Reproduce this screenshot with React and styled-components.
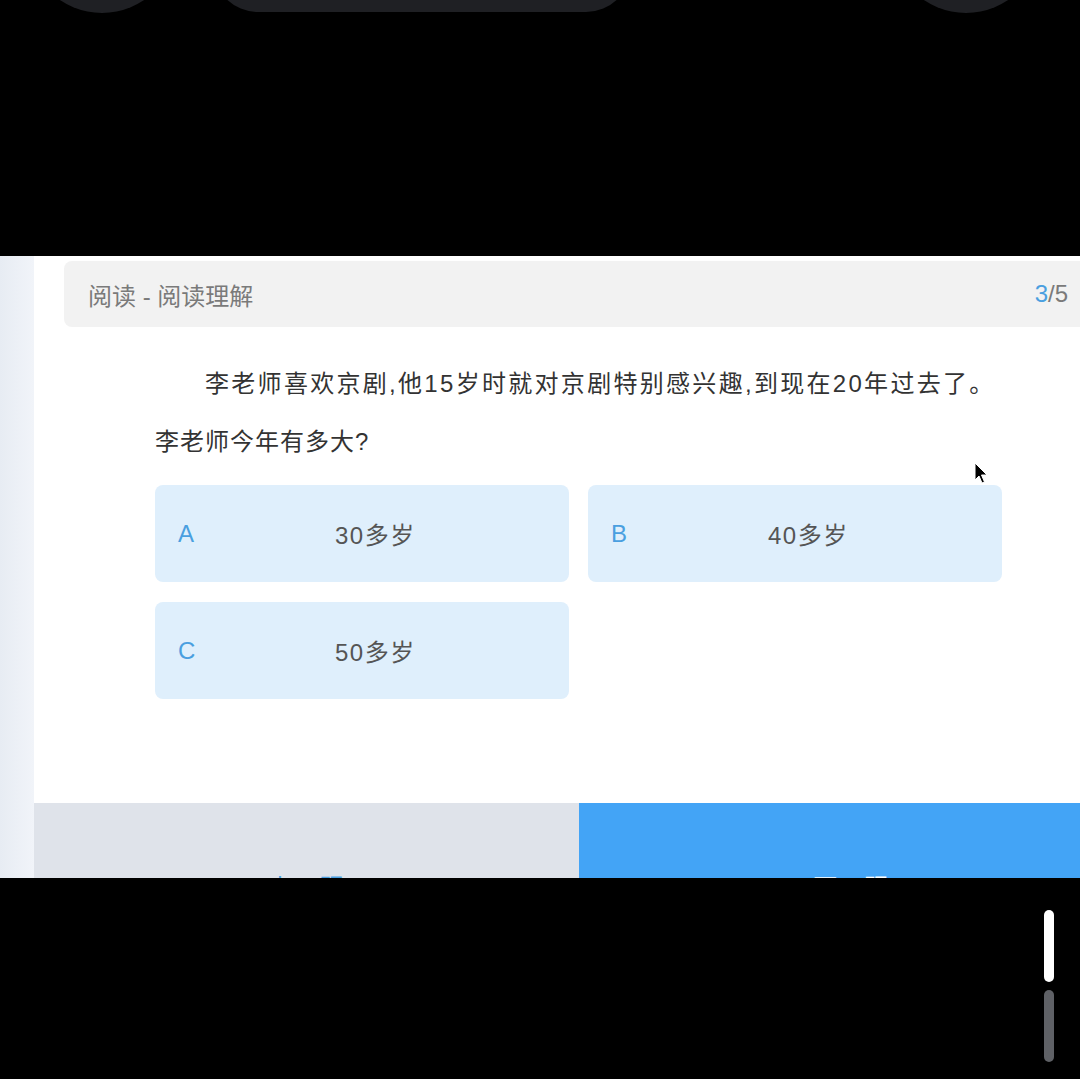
import React from "react";
import styled, { createGlobalStyle } from "styled-components";

const GlobalStyle = createGlobalStyle`
  html, body {
    margin: 0;
    padding: 0;
    background: #000;
    overflow: hidden;
  }
  body {
    font-family: "Liberation Sans", "Noto Sans CJK SC", sans-serif;
  }
`;

const Device = styled.div`
  width: 1080px;
  height: 1079px;
  background: #000;
  display: flex;
  flex-direction: column;
  overflow: hidden;
`;

const TopBezel = styled.div`
  height: 256px;
  flex-shrink: 0;
`;

const Screen = styled.div`
  position: relative;
  height: 622px;
  flex-shrink: 0;
  display: flex;
  overflow: hidden;
  background: #fff;
`;

const SideStrip = styled.div`
  width: 34px;
  flex-shrink: 0;
  background: linear-gradient(90deg, #e7ecf3 0%, #f1f4f9 100%);
`;

const Panel = styled.div`
  width: 1089px;
  flex-shrink: 0;
  background: #fff;
  display: flex;
  flex-direction: column;
  padding-top: 5px;

  & > * {
    flex-shrink: 0;
  }
`;

const Header = styled.div`
  margin: 0 30px;
  height: 66px;
  border-radius: 8px;
  background: #f2f2f2;
  padding: 0 25px 0 24px;
  display: flex;
  align-items: center;
  justify-content: space-between;
  font-size: 24px;
  color: #7a7a7a;
`;

const Counter = styled.span`
  color: #7a7a7a;
`;

const Current = styled.span`
  color: #4a9fe0;
`;

const Body = styled.div`
  padding: 28px 121px 0;
  display: flex;
  flex-direction: column;
`;

const Paragraph = styled.p`
  margin: 0;
  font-size: 24px;
  line-height: 58px;
  letter-spacing: ${(p) => (p.indent ? "2.3px" : "1px")};
  color: #333;
  text-indent: ${(p) => (p.indent ? "50px" : "0")};
  white-space: nowrap;
`;

const Options = styled.div`
  margin-top: 14px;
  display: grid;
  grid-template-columns: 1fr 1fr;
  column-gap: 19px;
  row-gap: 20px;
`;

const Option = styled.div`
  height: 97px;
  border-radius: 8px;
  background: #dfeffc;
  display: flex;
  align-items: center;
  padding-left: 23px;
`;

const Letter = styled.span`
  width: 157px;
  flex-shrink: 0;
  font-size: 24px;
  color: #4a9fe0;
`;

const OptionText = styled.span`
  font-size: 24px;
  letter-spacing: 1.5px;
  color: #555;
`;

const Footer = styled.div`
  margin-top: 104px;
  display: flex;
  height: 165px;
`;

const NavButton = styled.div`
  flex: 1;
  display: flex;
  align-items: center;
  justify-content: center;
  font-size: 24px;
  letter-spacing: 1px;
  background: ${(p) => (p.primary ? "#43a4f6" : "#dfe3ea")};
  color: ${(p) => (p.primary ? "#fff" : "#4a9fe0")};
`;

const Cursor = styled.svg`
  position: absolute;
  left: 974px;
  top: 206px;
`;

const BottomArea = styled.div`
  flex: 1;
  display: flex;
  flex-direction: column;
  align-items: flex-end;
  gap: 8px;
  padding: 32px 26px 0 0;
`;

const Pill = styled.div`
  width: 10px;
  height: 72px;
  border-radius: 5px;
  background: ${(p) => (p.active ? "#ffffff" : "#5f6166")};
`;

const options = [
  { key: "A", text: "30多岁" },
  { key: "B", text: "40多岁" },
  { key: "C", text: "50多岁" },
];

export default function App() {
  return (
    <>
      <GlobalStyle />
      <Device>
        <TopBezel>
          <svg width="1080" height="20" viewBox="0 0 1080 20">
            <circle cx="102" cy="-62" r="75" fill="#1f2024" />
            <rect x="213" y="-80" width="418" height="92" rx="45" fill="#1f2024" />
            <circle cx="966" cy="-62" r="75" fill="#1f2024" />
          </svg>
        </TopBezel>
        <Screen>
          <SideStrip />
          <Panel>
            <Header>
              <span>阅读 - 阅读理解</span>
              <Counter>
                <Current>3</Current>/5
              </Counter>
            </Header>
            <Body>
              <Paragraph indent>
                李老师喜欢京剧,他15岁时就对京剧特别感兴趣,到现在20年过去了。
              </Paragraph>
              <Paragraph>李老师今年有多大?</Paragraph>
              <Options>
                {options.map((o) => (
                  <Option key={o.key}>
                    <Letter>{o.key}</Letter>
                    <OptionText>{o.text}</OptionText>
                  </Option>
                ))}
              </Options>
            </Body>
            <Footer>
              <NavButton>上一题</NavButton>
              <NavButton primary>下一题</NavButton>
            </Footer>
          </Panel>
          <Cursor width="16" height="24" viewBox="0 0 16 24">
            <path
              d="M1 1 L1 18 L5 14 L8 21 L10.5 20 L7.5 13 L13 13 Z"
              fill="#000"
              stroke="#fff"
              strokeWidth="1"
              strokeLinejoin="round"
            />
          </Cursor>
        </Screen>
        <BottomArea>
          <Pill active />
          <Pill />
        </BottomArea>
      </Device>
    </>
  );
}
